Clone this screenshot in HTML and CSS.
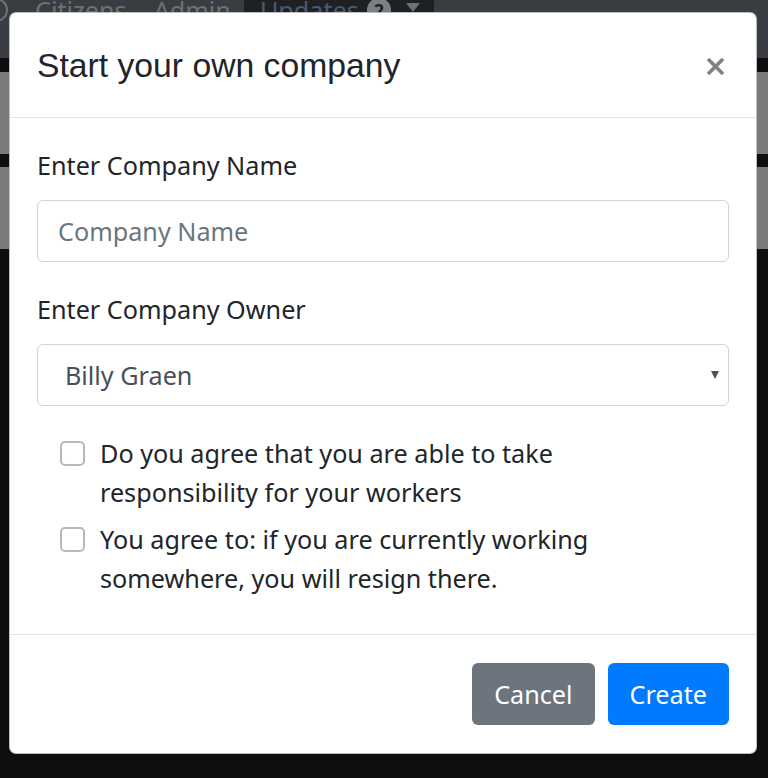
FILE: index.html
```html
<!DOCTYPE html>
<html lang="en">
<head>
<meta charset="utf-8">
<title>Start your own company</title>
<link rel="stylesheet" href="styles.css">
</head>
<body>
<div class="page">
  <nav class="navbar">
    <svg class="nav-icon" width="12" height="30" viewBox="0 0 12 30"><circle cx="-4" cy="10" r="11" fill="none" stroke="#6d7176" stroke-width="2"/></svg>
    <a class="nav-link">Citizens</a>
    <a class="nav-link">Admin</a>
    <a class="nav-link active">Updates <span class="badge">2</span><span class="caret"></span></a>
  </nav>
  <div class="content">
    <div class="panel"></div>
    <div class="panel"></div>
  </div>
</div>

<div class="modal">
  <div class="modal-header">
    <h5 class="modal-title">Start your own company</h5>
    <button class="close" type="button" aria-label="Close">
      <svg width="19" height="19" viewBox="0 0 19 19"><path d="M2 2L17 17M17 2L2 17" stroke="#808080" stroke-width="3.6" fill="none"/></svg>
    </button>
  </div>
  <div class="modal-body">
    <div class="form-group">
      <label class="form-label">Enter Company Name</label>
      <input class="form-control" type="text" placeholder="Company Name">
    </div>
    <div class="form-group">
      <label class="form-label">Enter Company Owner</label>
      <div class="select-wrap">
        <select class="form-control form-select">
          <option>Billy Graen</option>
        </select>
      </div>
    </div>
    <div class="checks">
      <label class="form-check">
        <input class="check-input" type="checkbox">
        <span class="check-label">Do you agree that you are able to take responsibility for your workers</span>
      </label>
      <label class="form-check">
        <input class="check-input" type="checkbox">
        <span class="check-label">You agree to: if you are currently working somewhere, you will resign there.</span>
      </label>
    </div>
  </div>
  <div class="modal-footer">
    <button class="btn btn-secondary" type="button">Cancel</button>
    <button class="btn btn-primary" type="button">Create</button>
  </div>
</div>
</body>
</html>
```

FILE: styles.css
```css
* { box-sizing: border-box; }

html, body {
  margin: 0;
  padding: 0;
}

body {
  background: #0e0e0e;
  font-family: "Noto Sans", "Open Sans", sans-serif;
  font-size: 25.2px;
  color: #212529;
  width: 768px;
  height: 778px;
  overflow: hidden;
  position: relative;
}

/* ---------- dimmed page behind ---------- */
.navbar {
  height: 58px;
  background: #393d42;
  display: flex;
  align-items: flex-start;
}

.nav-icon { display: block; margin-right: 23px; }

.nav-link {
  color: #6d7176;
  font-size: 25.2px;
  line-height: 20px;
  margin-right: 27px;
  white-space: nowrap;
}

.nav-link.active {
  height: 58px;
  background: #1e2124;
  color: #4b5a6e;
  padding: 0 14px 0 16px;
  margin-left: -14px;
  display: flex;
  align-items: flex-start;
}

.badge {
  display: inline-block;
  width: 24px;
  height: 24px;
  border-radius: 50%;
  background: #7c7f83;
  color: #1e2124;
  font-size: 18px;
  font-weight: 700;
  line-height: 24px;
  text-align: center;
  margin: -2px 0 0 8px;
}

.caret {
  display: inline-block;
  width: 0;
  height: 0;
  border-left: 7px solid transparent;
  border-right: 7px solid transparent;
  border-top: 9px solid #6d7176;
  margin: 3px 0 0 15px;
}

.content {
  padding-top: 14px;
}

.panel {
  height: 82px;
  background: #7b7b7b;
  margin-bottom: 13px;
}

/* ---------- modal ---------- */
.modal {
  position: absolute;
  top: 12px;
  left: 9px;
  width: 748px;
  background: #fff;
  border: 1px solid rgba(0, 0, 0, 0.25);
  border-radius: 7px;
}

.modal-header {
  height: 105px;
  display: flex;
  align-items: center;
  justify-content: space-between;
  padding: 0 31px 0 27px;
  border-bottom: 1px solid #dee2e6;
}

.modal-title {
  margin: 0;
  font-family: "Liberation Sans", Arial, sans-serif;
  font-weight: 400;
  font-size: 33.7px;
  line-height: 40px;
  color: #212529;
}

.close {
  border: 0;
  background: transparent;
  padding: 0;
  margin: 2px 0 0 0;
  display: flex;
  cursor: pointer;
}

.modal-body {
  padding: 28px 27px 36px;
}

.form-group {
  margin-bottom: 28px;
}

.form-label {
  display: block;
  line-height: 39px;
  margin-bottom: 15px;
}

.form-control {
  display: block;
  width: 100%;
  height: 62px;
  padding: 0 20px;
  border: 1px solid #ced4da;
  border-radius: 6px;
  font-family: inherit;
  font-size: 25.2px;
  color: #495057;
  background: #fff;
  outline: none;
}

.form-control::placeholder { color: #6c757d; opacity: 1; }

.select-wrap { position: relative; }

.form-select {
  appearance: none;
  -webkit-appearance: none;
  padding-left: 27px;
}

.select-wrap::after {
  content: "";
  position: absolute;
  right: 10px;
  top: 27px;
  border-left: 4.5px solid transparent;
  border-right: 4.5px solid transparent;
  border-top: 8px solid #495057;
}

.checks {
  display: flex;
  flex-direction: column;
  gap: 8px;
}

.form-check {
  display: flex;
  align-items: flex-start;
  line-height: 39px;
  padding: 0 30px 0 23px;
}

.check-input {
  appearance: none;
  -webkit-appearance: none;
  flex: 0 0 25px;
  width: 25px;
  height: 25px;
  margin: 7px 15px 0 0;
  border: 2px solid #b3b9bf;
  border-radius: 5px;
  background: #fff;
}

.modal-footer {
  display: flex;
  justify-content: flex-end;
  gap: 13px;
  padding: 28px 27px;
  border-top: 1px solid #dee2e6;
}

.btn {
  height: 62px;
  padding: 0 22px;
  border: 0;
  border-radius: 6px;
  font-family: inherit;
  font-size: 25.2px;
  color: #fff;
  cursor: pointer;
}

.btn-secondary { background: #6c757d; }
.btn-primary { background: #007bff; }
```
